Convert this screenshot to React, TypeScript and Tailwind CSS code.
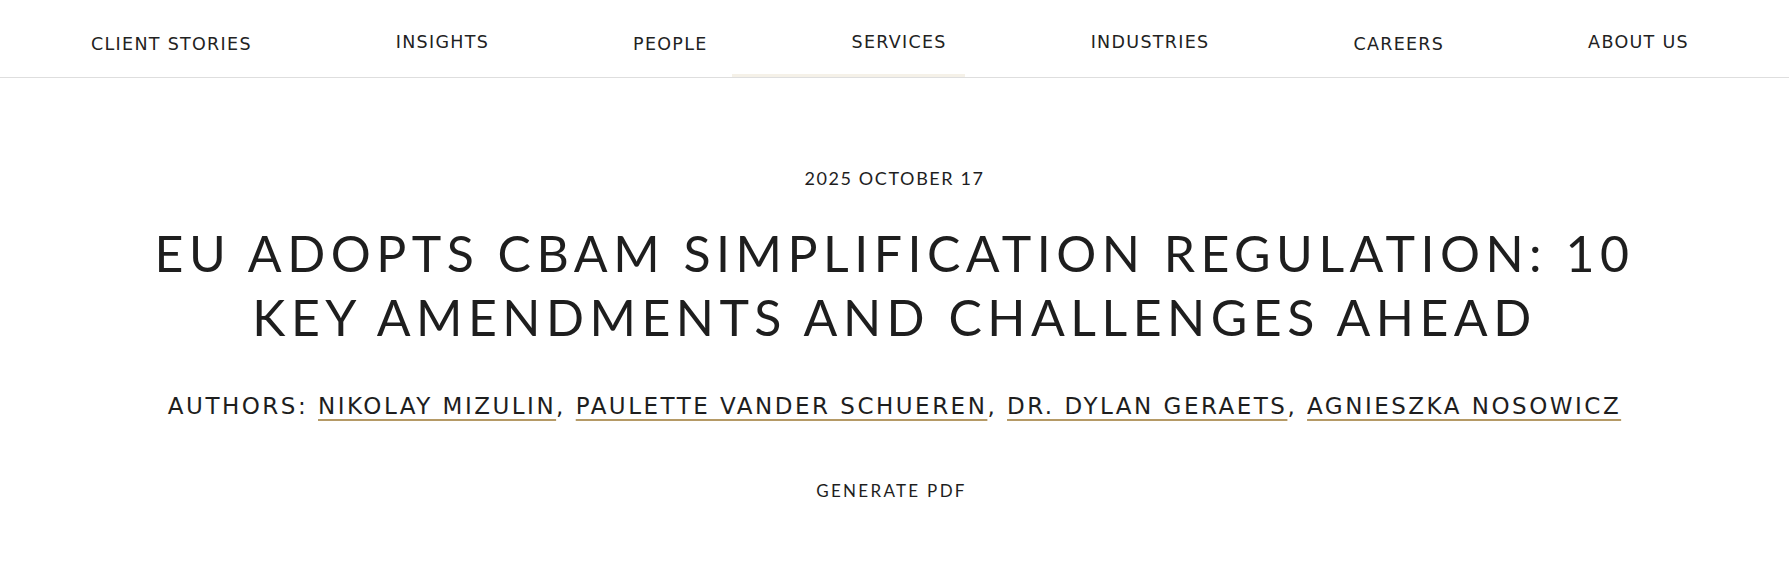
const NAV = [
  { label: 'CLIENT STORIES', up: false },
  { label: 'INSIGHTS', up: true },
  { label: 'PEOPLE', up: false },
  { label: 'SERVICES', up: true },
  { label: 'INDUSTRIES', up: true },
  { label: 'CAREERS', up: false },
  { label: 'ABOUT US', up: true },
];

const AUTHORS = ['NIKOLAY MIZULIN', 'PAULETTE VANDER SCHUEREN', 'DR. DYLAN GERAETS', 'AGNIESZKA NOSOWICZ'];

export default function App() {
  return (
    <div className="min-h-[563px] w-full bg-white text-[#1e1e1e]">
      {/* Top navigation */}
      <header className="relative border-b border-[#dedede]">
        <nav className="flex h-[77px] items-center justify-between pl-[91px] pr-[100px] pt-[11px] font-['DejaVu_Sans',sans-serif] text-[17.5px] tracking-[1.3px] text-[#222]">
          {NAV.map((item) => (
            <a key={item.label} href="#" className={item.up ? 'pb-[3px]' : ''}>
              {item.label}
            </a>
          ))}
        </nav>
        <div className="absolute bottom-0 left-[732px] h-[3px] w-[233px] bg-[#f5f1e8]" />
      </header>

      {/* Article header */}
      <main className="flex flex-col items-center pt-[88px] text-center">
        <div className="font-['Lato',sans-serif] text-[18px] leading-[24px] tracking-[1.6px]">
          2025 OCTOBER 17
        </div>
        <h1 className="mt-[31px] max-w-[1600px] font-['Lato',sans-serif] text-[50px] font-normal leading-[64px] tracking-[5.5px]">
          EU ADOPTS CBAM SIMPLIFICATION REGULATION: 10
          <br />
          KEY AMENDMENTS AND CHALLENGES AHEAD
        </h1>
        <p className="mt-[42px] font-['DejaVu_Sans',sans-serif] text-[23px] leading-[30px] tracking-[2.5px]">
          AUTHORS:{' '}
          {AUTHORS.map((name, i) => (
            <span key={name}>
              <a
                href="#"
                className="underline decoration-[#b59a66] decoration-2 underline-offset-[5px]"
              >
                {name}
              </a>
              {i < AUTHORS.length - 1 ? ', ' : ''}
            </span>
          ))}
        </p>
        <button className="mr-[6px] mt-[58px] font-['Lato',sans-serif] text-[17px] leading-[24px] tracking-[2.3px]">
          GENERATE PDF
        </button>
      </main>
    </div>
  );
}
